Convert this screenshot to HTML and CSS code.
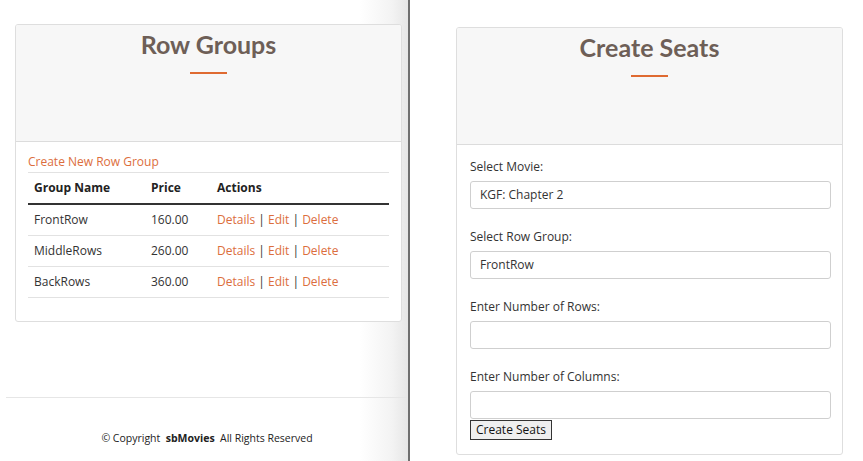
FILE: index.html
```html
<!DOCTYPE html>
<html>
<head>
<meta charset="utf-8">
<link rel="stylesheet" href="styles.css">
</head>
<body>
<div class="screen">
  <div class="pane pane-left">
    <div class="card card-left">
      <div class="card-header">
        <h2 class="card-title">Row Groups</h2>
        <div class="title-rule"></div>
      </div>
      <div class="card-body">
        <a class="link create-link" href="#">Create New Row Group</a>
        <table class="table">
          <thead>
            <tr><th class="col-name">Group Name</th><th class="col-price">Price</th><th>Actions</th></tr>
          </thead>
          <tbody>
            <tr><td>FrontRow</td><td>160.00</td><td><a class="link" href="#">Details</a> | <a class="link" href="#">Edit</a> | <a class="link" href="#">Delete</a></td></tr>
            <tr><td>MiddleRows</td><td>260.00</td><td><a class="link" href="#">Details</a> | <a class="link" href="#">Edit</a> | <a class="link" href="#">Delete</a></td></tr>
            <tr><td>BackRows</td><td>360.00</td><td><a class="link" href="#">Details</a> | <a class="link" href="#">Edit</a> | <a class="link" href="#">Delete</a></td></tr>
          </tbody>
        </table>
      </div>
    </div>
    <footer class="footer">
      <p class="copyright">© Copyright &nbsp;<b>sbMovies</b>&nbsp; All Rights Reserved</p>
    </footer>
  </div>
  <div class="pane pane-right">
    <div class="card card-right">
      <div class="card-header">
        <h2 class="card-title">Create Seats</h2>
        <div class="title-rule"></div>
      </div>
      <div class="card-body form-body">
        <div class="field">
          <label class="label">Select Movie:</label>
          <div class="control">KGF: Chapter 2</div>
        </div>
        <div class="field">
          <label class="label">Select Row Group:</label>
          <div class="control">FrontRow</div>
        </div>
        <div class="field">
          <label class="label">Enter Number of Rows:</label>
          <div class="control"></div>
        </div>
        <div class="field field-last">
          <label class="label">Enter Number of Columns:</label>
          <div class="control"></div>
        </div>
        <button class="btn" type="button">Create Seats</button>
      </div>
    </div>
  </div>
</div>
</body>
</html>
```
FILE: styles.css
```css
* { box-sizing: border-box; }
html, body { margin: 0; padding: 0; background: #fff; }
body {
  font-family: "Open Sans", "Liberation Sans", sans-serif;
  font-size: 12px;
  color: #333;
  width: 863px;
  height: 461px;
  overflow: hidden;
}
.screen { display: flex; height: 461px; }
.pane { height: 461px; }
.pane-left {
  width: 410px;
  flex: 0 0 410px;
  border-right: 2px solid #6f6f6f;
  background: linear-gradient(to right, #ffffff 0px, #ffffff 360px, #f3f3f3 392px, #e6e6e6 408px);
  padding-top: 24px;
}
.pane-right {
  flex: 1;
  padding-top: 27px;
  padding-left: 46px;
}
.card {
  width: 387px;
  border: 1px solid #dedede;
  border-radius: 3px;
  background: #fff;
  overflow: hidden;
}
.card-left { margin-left: 15px; }
.card-header {
  height: 117px;
  background: #f7f7f7;
  border-bottom: 1px solid #dcdcdc;
  padding-top: 4px;
  text-align: center;
}
.card-title {
  margin: 0;
  font-family: "Lato", "Open Sans", sans-serif;
  font-weight: 700;
  font-size: 25px;
  line-height: 30px;
  color: #6e5f57;
}
.title-rule {
  width: 37px;
  height: 2px;
  background: #df6a31;
  margin: 13px auto 0;
}
.card-body { padding: 10px 12px 23px 12px; }
.link { color: #dc6e3d; text-decoration: none; }
.create-link { display: block; line-height: 20px; }
.table {
  width: 100%;
  border-collapse: collapse;
  border-top: 1px solid #e2e2e2;
}
.table th, .table td {
  text-align: left;
  padding: 7px 6px;
  line-height: 16px;
}
.table th { font-weight: 700; color: #222; border-bottom: 2px solid #333; }
.table td { border-bottom: 1px solid #e2e2e2; }
.col-name { width: 117px; }
.col-price { width: 66px; }
.footer {
  margin-top: 75px;
  margin-left: 6px;
  border-top: 1px solid #e6e6e6;
  text-align: center;
  padding-top: 33px;
}
.copyright { margin: 0; font-size: 10.5px; color: #222; }
.form-body { padding: 12px 12px 14px 13px; }
.field { display: flex; flex-direction: column; gap: 5px; margin-bottom: 18px; }
.field-last { margin-bottom: 1px; }
.label { line-height: 19px; color: #333; }
.control {
  width: 361px;
  height: 28px;
  border: 1px solid #cfcfcf;
  border-radius: 3px;
  padding: 0 9px;
  line-height: 26px;
  color: #333;
}
.btn {
  display: block;
  font-family: "Open Sans", "Liberation Sans", sans-serif;
  font-size: 12px;
  line-height: 18px;
  padding: 0 5px;
  border: 1px solid #333;
  border-radius: 0;
  background: #efefef;
  color: #111;
}
```
